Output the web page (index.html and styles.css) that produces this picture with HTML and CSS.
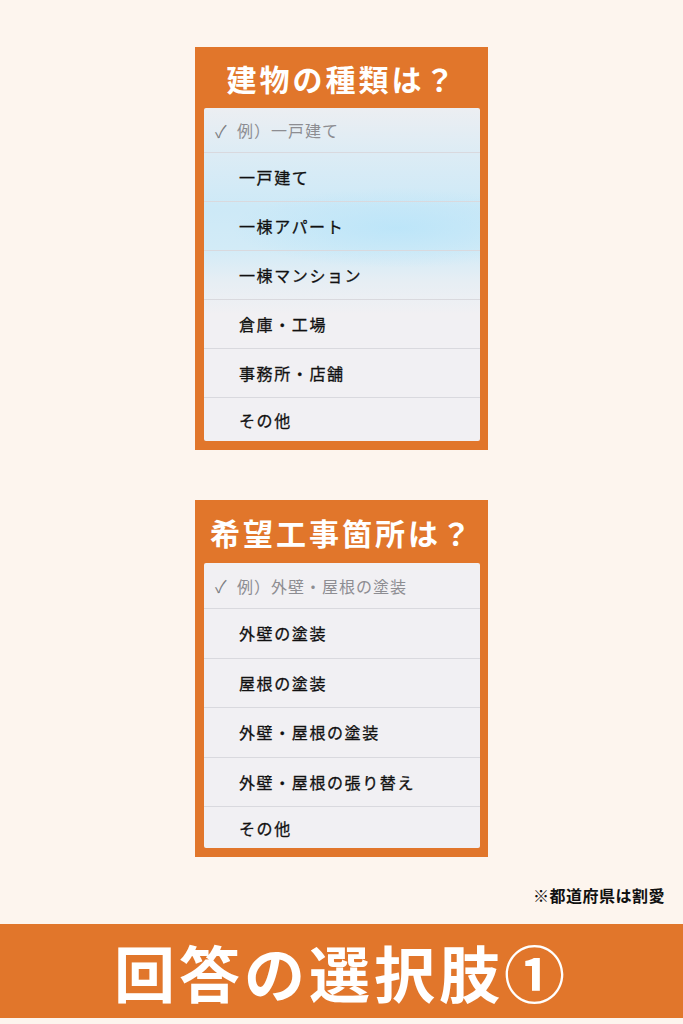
FILE: index.html
```html
<!DOCTYPE html>
<html lang="ja">
<head>
    <meta charset="UTF-8">
    <meta name="viewport" content="width=device-width, initial-scale=1.0">
    <title>回答の選択肢①</title>
    <link rel="stylesheet" href="styles.css">
</head>
<body>

    <div class="page">
        <div class="card card-first">
            <h2 class="card-title">建物の種類は？</h2>
            <ul class="picker picker-blue">
                <li class="option placeholder"><span class="check">✓</span>例）一戸建て</li>
                <li class="option">一戸建て</li>
                <li class="option">一棟アパート</li>
                <li class="option">一棟マンション</li>
                <li class="option">倉庫・工場</li>
                <li class="option">事務所・店舗</li>
                <li class="option last">その他</li>
            </ul>
        </div>

        <div class="card card-second">
            <h2 class="card-title">希望工事箇所は？</h2>
            <ul class="picker">
                <li class="option placeholder"><span class="check">✓</span>例）外壁・屋根の塗装</li>
                <li class="option">外壁の塗装</li>
                <li class="option">屋根の塗装</li>
                <li class="option">外壁・屋根の塗装</li>
                <li class="option">外壁・屋根の張り替え</li>
                <li class="option last">その他</li>
            </ul>
        </div>

        <p class="note">※都道府県は割愛</p>
    </div>

    <div class="banner">
        <h1>回答の選択肢①</h1>
    </div>

</body>
</html>
```

FILE: styles.css
```css
body {
    margin: 0;
    background: #fdf5ee;
    font-family: "Noto Sans CJK JP", "Noto Sans", sans-serif;
    color: #111;
}

.page {
    display: flex;
    flex-direction: column;
    align-items: center;
}

.card {
    width: 276px;
    background: #e1762b;
    padding: 0 8px 9px 9px;
}

.card-first {
    margin-top: 47px;
}

.card-second {
    margin-top: 50px;
}

.card-title {
    margin: 0;
    height: 61px;
    display: flex;
    align-items: center;
    justify-content: center;
    color: #fff;
    font-size: 30px;
    font-weight: 700;
    letter-spacing: 3px;
}

.card-second .card-title {
    height: 63px;
}

.picker {
    list-style: none;
    margin: 0;
    padding: 0;
    background: #f1f0f3;
    border-radius: 2px;
}

.picker-blue {
    background:
        radial-gradient(ellipse 60% 12% at 70% 36%, rgba(184, 228, 249, 0.8) 0%, rgba(184, 228, 249, 0) 100%),
        linear-gradient(#eceef2 0%, #dcecf5 14%, #cde9f7 30%, #d2ebf7 42%, #e6eef4 52%, #f1f0f3 62%, #f1f0f3 100%);
}

.option {
    height: 48px;
    display: flex;
    align-items: center;
    padding-left: 35px;
    border-top: 1px solid #d9d9de;
    font-size: 16px;
    font-weight: 400;
    letter-spacing: 1.6px;
    -webkit-text-stroke: 0.3px #111;
}

.option.placeholder {
    height: 44px;
    border-top: none;
    padding-left: 11px;
    color: #8d8d92;
    letter-spacing: 1px;
    -webkit-text-stroke: 0;
}

.card-second .option {
    height: 48.6px;
}

.card-second .option.placeholder {
    height: 45px;
}

.option.last {
    height: 43px;
}

.card-second .option.last {
    height: 41px;
}

.check {
    width: 22px;
    font-size: 17px;
    color: #7d7d82;
}

.note {
    align-self: flex-end;
    margin: 26px 18px 0 0;
    font-size: 16px;
    font-weight: 700;
    color: #111;
    letter-spacing: 0.5px;
}

.banner {
    margin-top: 17px;
    height: 94px;
    background: #e1762b;
    display: flex;
    align-items: center;
    justify-content: center;
}

.banner h1 {
    margin: 0;
    color: #fff;
    font-size: 61px;
    font-weight: 700;
    letter-spacing: 4px;
}
```
